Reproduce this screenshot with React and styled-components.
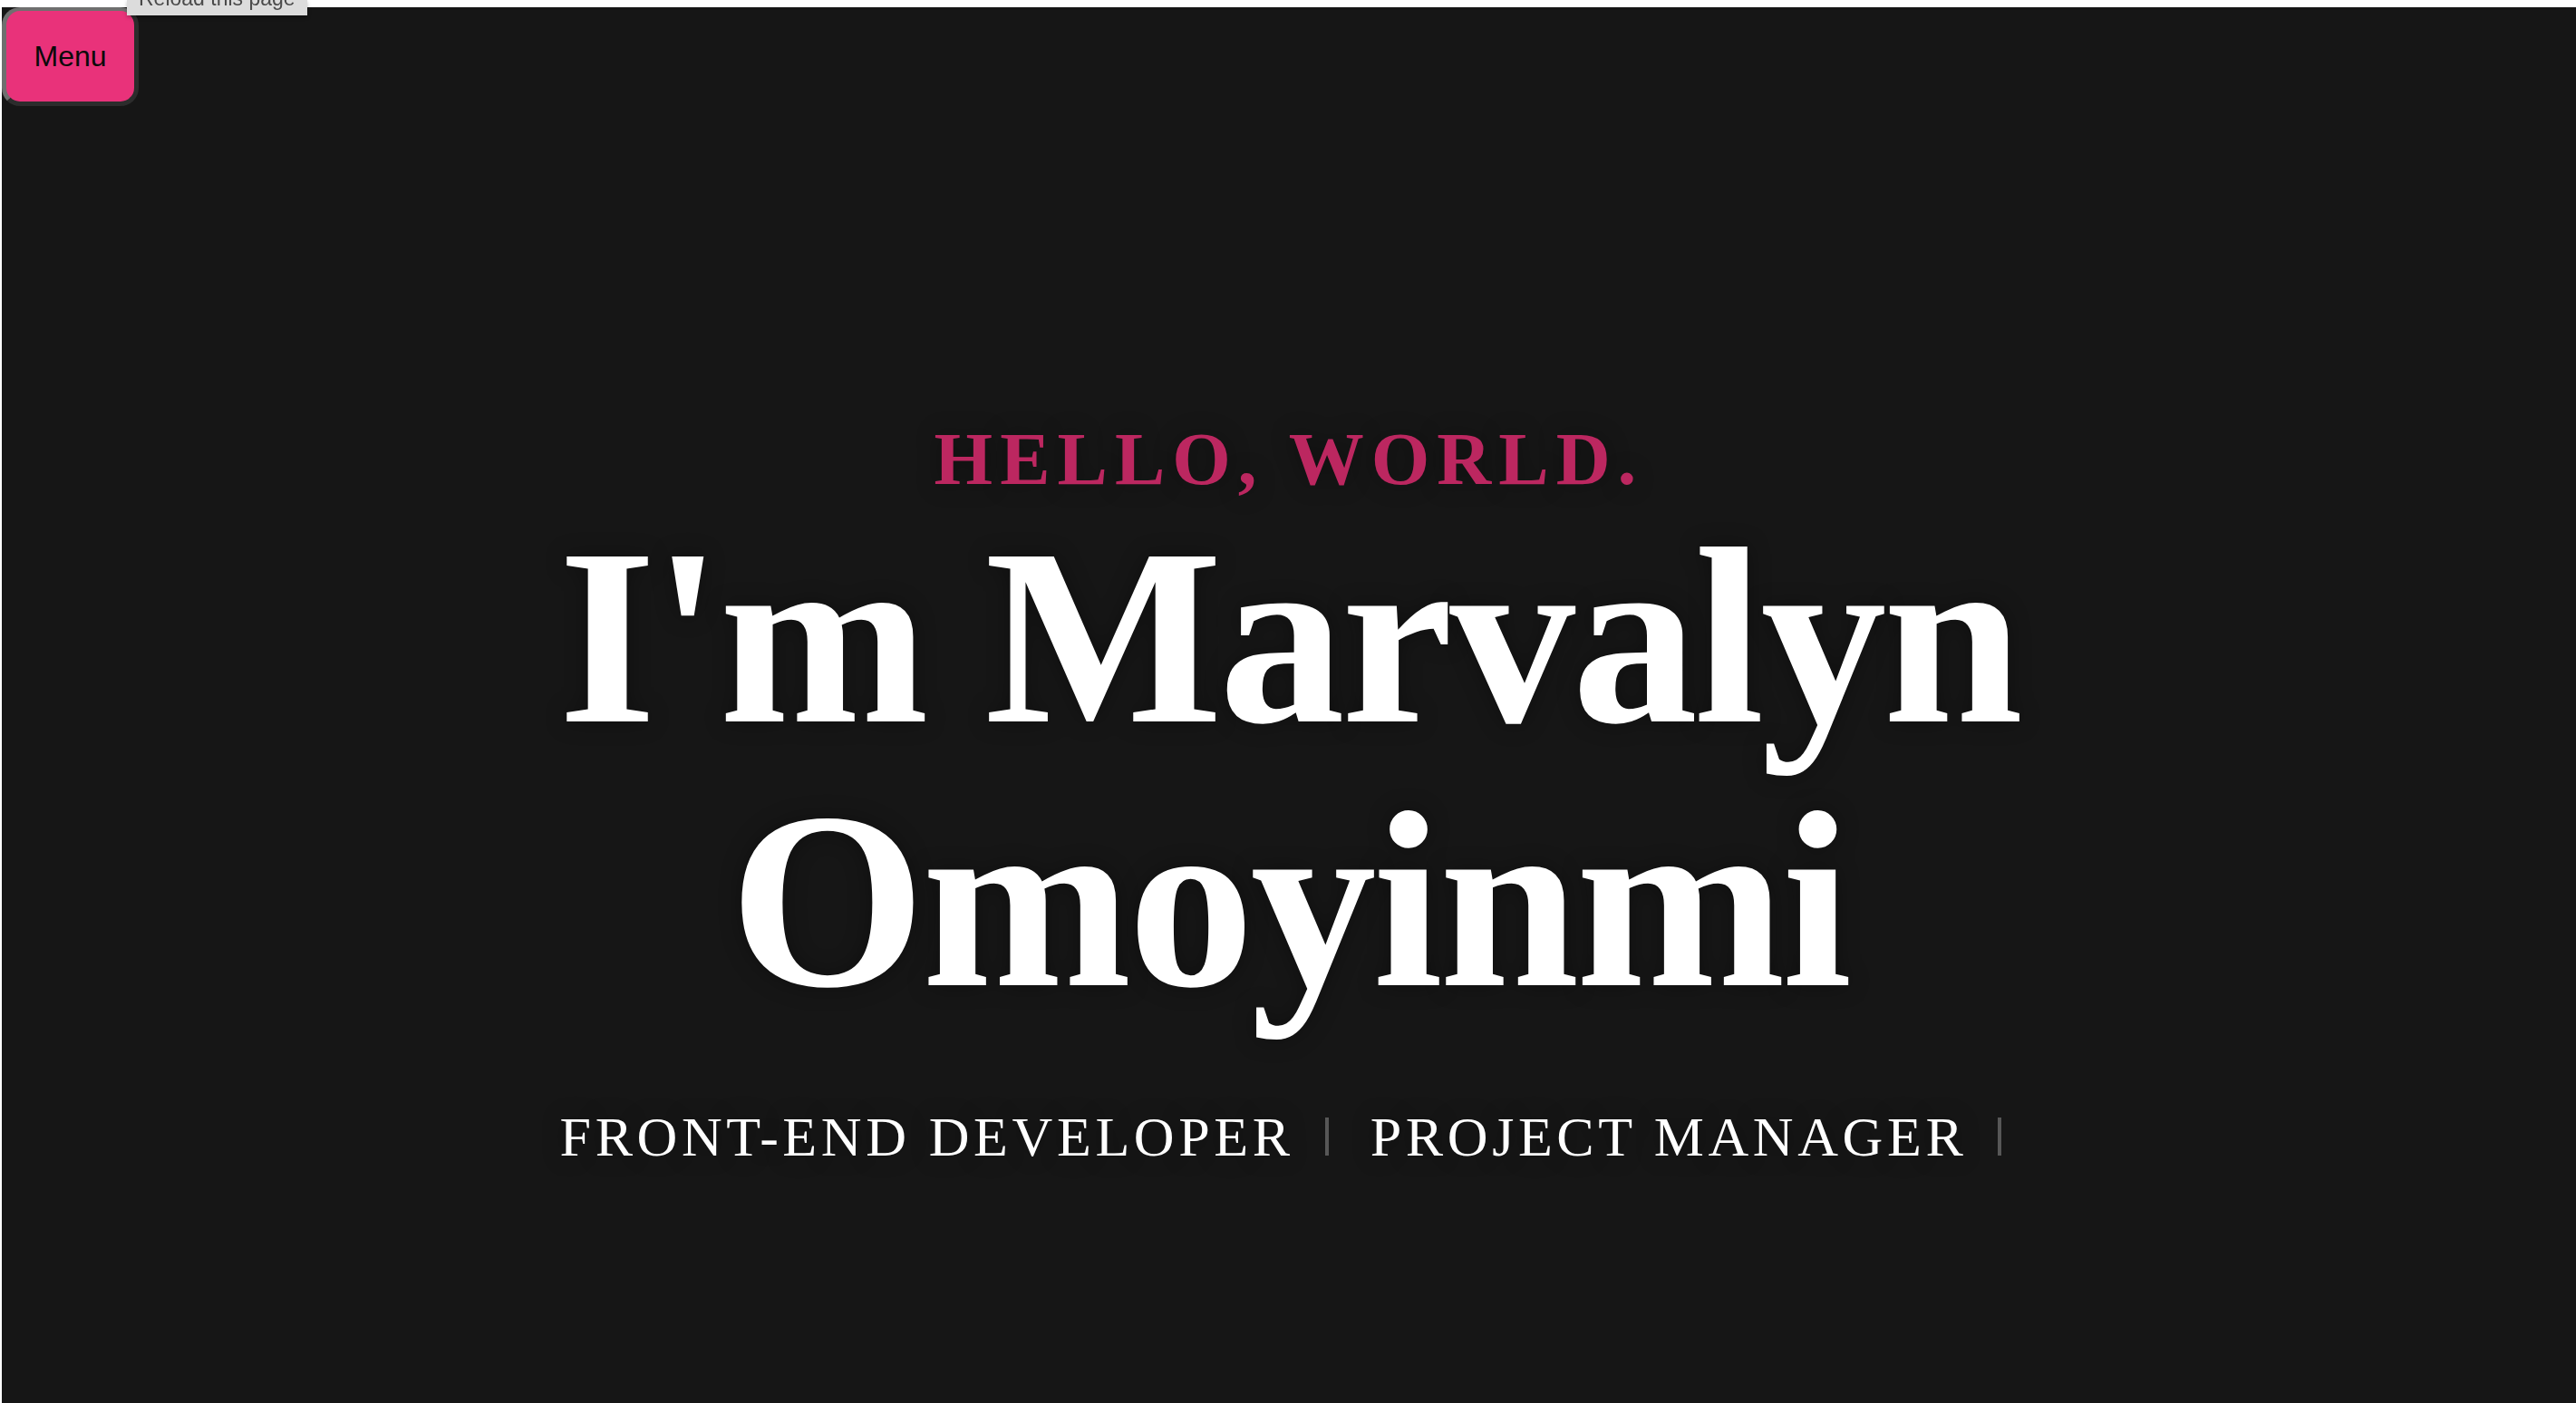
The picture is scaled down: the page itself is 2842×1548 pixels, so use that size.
import styled, { createGlobalStyle } from "styled-components";

const GlobalStyle = createGlobalStyle`
  html, body {
    margin: 0;
    padding: 0;
    background: #ffffff;
  }

  body {
    padding: 8px 0 0 2px;
    box-sizing: border-box;
    height: 100vh;
    overflow: hidden;
  }

  #root {
    height: 100%;
  }
`;

const roles = ["Front-End Developer", "Project Manager"];

const App = () => {
  return (
    <>
      <GlobalStyle />
      <StyledHero>
        <MenuButton type="button">Menu</MenuButton>
        <Greeting>Hello, World.</Greeting>
        <Name>
          I'm Marvalyn
          <br />
          Omoyinmi
        </Name>
        <Roles>
          {roles.map((role) => (
            <Role key={role}>{role}</Role>
          ))}
        </Roles>
      </StyledHero>
      <Tooltip>
        <span>Reload this page</span>
      </Tooltip>
    </>
  );
};

const StyledHero = styled.section`
  position: relative;
  height: 100%;
  display: flex;
  flex-direction: column;
  align-items: center;
  justify-content: center;
  padding-top: 176px;
  box-sizing: border-box;
  background: #161616;
  font-family: "Liberation Serif", "Times New Roman", serif;
  text-shadow: 0 0 24px rgba(0, 0, 0, 0.35);
`;

const MenuButton = styled.button`
  position: absolute;
  top: 0;
  left: 0;
  width: 151px;
  height: 109px;
  border: 5px solid;
  border-color: #6f6f6f #2c2c2c #2c2c2c #6f6f6f;
  border-top-width: 4px;
  border-radius: 20px;
  background: #e9327a;
  color: #0a0a0a;
  font-family: "Liberation Sans", Arial, sans-serif;
  font-size: 32px;
  cursor: pointer;
  text-shadow: none;
`;

const Greeting = styled.h2`
  margin: 0;
  font-size: 83px;
  line-height: 1.2;
  font-weight: 700;
  letter-spacing: 8px;
  text-transform: uppercase;
  color: #bc2760;
`;

const Name = styled.h1`
  margin: 0;
  font-size: 278px;
  line-height: 291px;
  font-weight: 700;
  letter-spacing: -4px;
  text-align: center;
  color: #ffffff;
`;

const Roles = styled.div`
  margin-top: 94px;
  margin-right: 18px;
  display: flex;
  align-items: center;
`;

const Role = styled.span`
  display: inline-block;
  padding-right: 34px;
  margin-right: 46px;
  border-right: 4px solid #575757;
  font-size: 62px;
  line-height: 42px;
  letter-spacing: 4.6px;
  text-transform: uppercase;
  color: #ffffff;

  &:last-child {
    margin-right: 0;
  }
`;

const Tooltip = styled.div`
  position: fixed;
  top: 0;
  left: 140px;
  width: 199px;
  height: 17px;
  overflow: hidden;
  padding-left: 13px;
  box-sizing: border-box;
  background: #dcdcdc;
  box-shadow: 0 2px 4px rgba(0, 0, 0, 0.25);
  font-family: "Liberation Sans", Arial, sans-serif;
  font-size: 23px;
  line-height: 23px;
  color: #4a4a4a;
  white-space: nowrap;

  span {
    display: block;
    margin-top: -13px;
  }
`;

export default App;
